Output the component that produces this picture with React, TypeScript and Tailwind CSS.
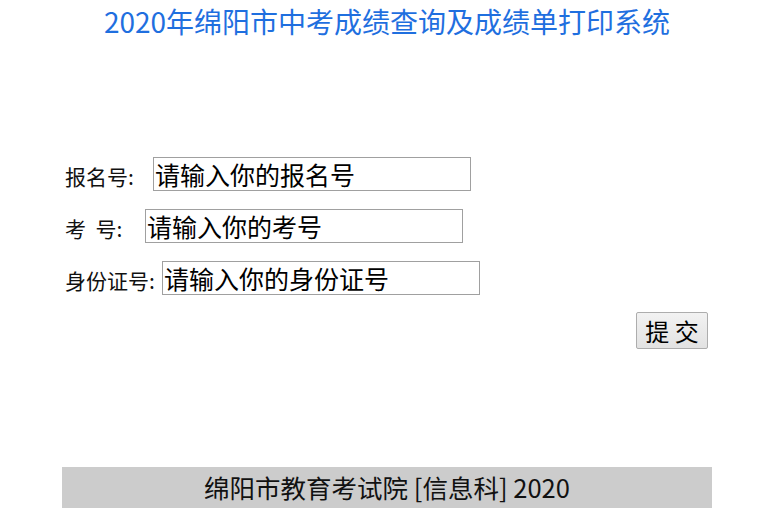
const font = { fontFamily: '"Noto Sans CJK SC", "Noto Sans", sans-serif' }

const fields = [
  { label: '报名号:', placeholder: '请输入你的报名号', width: 'w-[88px]' },
  { label: '考\u00a0\u00a0号:', placeholder: '请输入你的考号', width: 'w-[80px]' },
  { label: '身份证号:', placeholder: '请输入你的身份证号', width: 'w-[97px]' },
]

export default function App() {
  return (
    <div className="min-h-[527px] w-full bg-white text-black" style={font}>
      <div className="ml-[62px] w-[650px]">
        <h1 className="text-center text-[28px] leading-[42px] font-normal text-[#1f6fdf]">
          2020年绵阳市中考成绩查询及成绩单打印系统
        </h1>

        <form className="mt-[115px] flex flex-col" onSubmit={(e) => e.preventDefault()}>
          {fields.map((f) => (
            <div key={f.label} className="mb-[18px] flex h-[34px] items-baseline pl-[3px]">
              <span className={`${f.width} shrink-0 text-[21px] text-[#111]`}>{f.label}</span>
              <input
                type="text"
                placeholder={f.placeholder}
                className="h-[34px] w-[318px] border border-[#a0a0a0] px-[1px] text-[25px] leading-[32px] text-black placeholder:text-black outline-none"
                style={font}
              />
            </div>
          ))}

          <div className="-mt-[1px] flex justify-end pr-[4px]">
            <button
              type="submit"
              className="h-[37px] w-[72px] rounded-[2px] border border-[#adadad] bg-gradient-to-b from-[#f2f2f2] to-[#e2e2e2] text-[24px] leading-[35px] text-black"
              style={font}
            >
              提 交
            </button>
          </div>
        </form>

        <div className="mt-[118px] flex h-[41px] items-center justify-center bg-[#cccccc] text-[25.5px] text-[#111]">
          绵阳市教育考试院 [信息科] 2020
        </div>
      </div>
    </div>
  )
}
